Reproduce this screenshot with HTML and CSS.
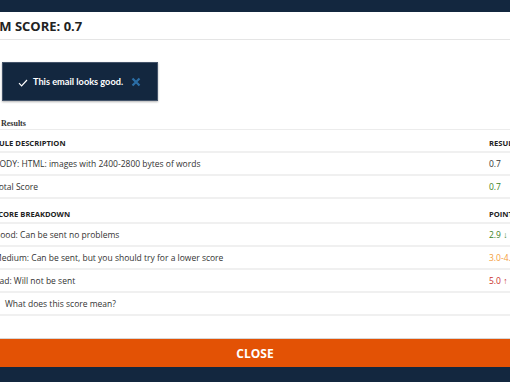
FILE: index.html
```html
<!DOCTYPE html>
<html lang="en">
<head>
  <meta charset="UTF-8" />
  <meta name="viewport" content="width=device-width, initial-scale=1.0">
  <title>Spam Score</title>
  <link rel="stylesheet" href="styles.css">
</head>
<body>
  <div class="topbar"></div>

  <div class="modal">
    <div class="modal-header">
      <h2 class="modal-title">SPAM SCORE: 0.7</h2>
    </div>

    <div class="modal-body">
      <div class="alert">
        <svg class="alert-check" width="10" height="8" viewBox="0 0 10 8">
          <path d="M1 4.2 L3.6 6.8 L9 1" fill="none" stroke="#fff" stroke-width="1.2"/>
        </svg>
        <span class="alert-text">This email looks good.</span>
        <svg class="alert-close" width="10" height="10" viewBox="0 0 10 10">
          <path d="M1.5 1.5 L8.5 8.5 M8.5 1.5 L1.5 8.5" fill="none" stroke="#2b6ea6" stroke-width="2.2"/>
        </svg>
      </div>

      <div class="results-title">Results</div>

      <table class="results">
        <colgroup>
          <col>
          <col class="col-value">
        </colgroup>
        <tr class="head">
          <th>RULE DESCRIPTION</th>
          <th>RESULT</th>
        </tr>
        <tr>
          <td>BODY: HTML: images with 2400-2800 bytes of words</td>
          <td>0.7</td>
        </tr>
        <tr>
          <td>Total Score</td>
          <td class="good">0.7</td>
        </tr>
        <tr class="head head-2">
          <th>SCORE BREAKDOWN</th>
          <th>POINTS</th>
        </tr>
        <tr>
          <td>Good: Can be sent no problems</td>
          <td class="good">2.9 &darr;</td>
        </tr>
        <tr>
          <td>Medium: Can be sent, but you should try for a lower score</td>
          <td class="medium">3.0-4.9</td>
        </tr>
        <tr>
          <td>Bad: Will not be sent</td>
          <td class="bad">5.0 &uarr;</td>
        </tr>
        <tr class="help">
          <td colspan="2">What does this score mean?</td>
        </tr>
      </table>
    </div>

    <button class="close-btn">CLOSE</button>
  </div>
</body>
</html>
```

FILE: styles.css
```css
body {
  margin: 0;
  background: #13273f;
  font-family: 'Open Sans', Arial, sans-serif;
  overflow: hidden;
}

.topbar {
  height: 12px;
  background: #13273f;
}

.modal {
  margin: 0 -30px;
  background: #fff;
}

.modal-header {
  height: 27px;
  border-bottom: 1px solid #e5e5e5;
  display: flex;
  align-items: center;
  padding-left: 5px;
}

.modal-title {
  margin: 0;
  font-size: 13px;
  font-weight: 700;
  color: #222;
}

.modal-body {
  padding: 22px 0 22px 24px;
}

.alert {
  margin-left: 8px;
  width: 154px;
  height: 37px;
  background: #13273f;
  border: 1px solid #44546a;
  box-shadow: 0 1px 2px rgba(0, 0, 0, 0.3);
  display: flex;
  align-items: center;
}

.alert-check {
  margin-left: 15px;
  margin-top: 2px;
}

.alert-text {
  margin-left: 5px;
  font-family: Lato, 'Open Sans', sans-serif;
  font-weight: 700;
  font-size: 9.2px;
  color: #fff;
}

.alert-close {
  margin-left: 8px;
  margin-top: 1px;
}

.results-title {
  margin-top: 18px;
  padding-left: 7px;
  height: 10px;
  line-height: 10px;
  font-family: 'Liberation Serif', serif;
  font-weight: 700;
  font-size: 8px;
  color: #333;
}

.results {
  width: 100%;
  border-collapse: collapse;
  table-layout: fixed;
  border-top: 1px solid #ececec;
  font-size: 8.5px;
  color: #333;
}

.col-value {
  width: 51px;
}

.results th,
.results td {
  padding: 0;
  text-align: left;
  white-space: nowrap;
  overflow: visible;
  border-bottom: 2px solid #f0f0f0;
}

.results td {
  height: 21px;
  vertical-align: middle;
}

.results th {
  height: 18px;
  vertical-align: bottom;
  padding-bottom: 3px;
  font-weight: 700;
  font-size: 7.6px;
  color: #222;
}

.results .head-2 th {
  height: 20px;
}

.results .help td {
  padding-left: 11px;
}

.good { color: #3a8224; }
.medium { color: #f5a03c; }
.bad { color: #c9302c; }

.close-btn {
  display: block;
  width: 100%;
  height: 29px;
  border: none;
  border-top: 1px solid #d6d6d6;
  background: #e35205;
  color: #fff;
  font-family: 'Open Sans', Arial, sans-serif;
  font-weight: 700;
  font-size: 12px;
  cursor: pointer;
}
```
